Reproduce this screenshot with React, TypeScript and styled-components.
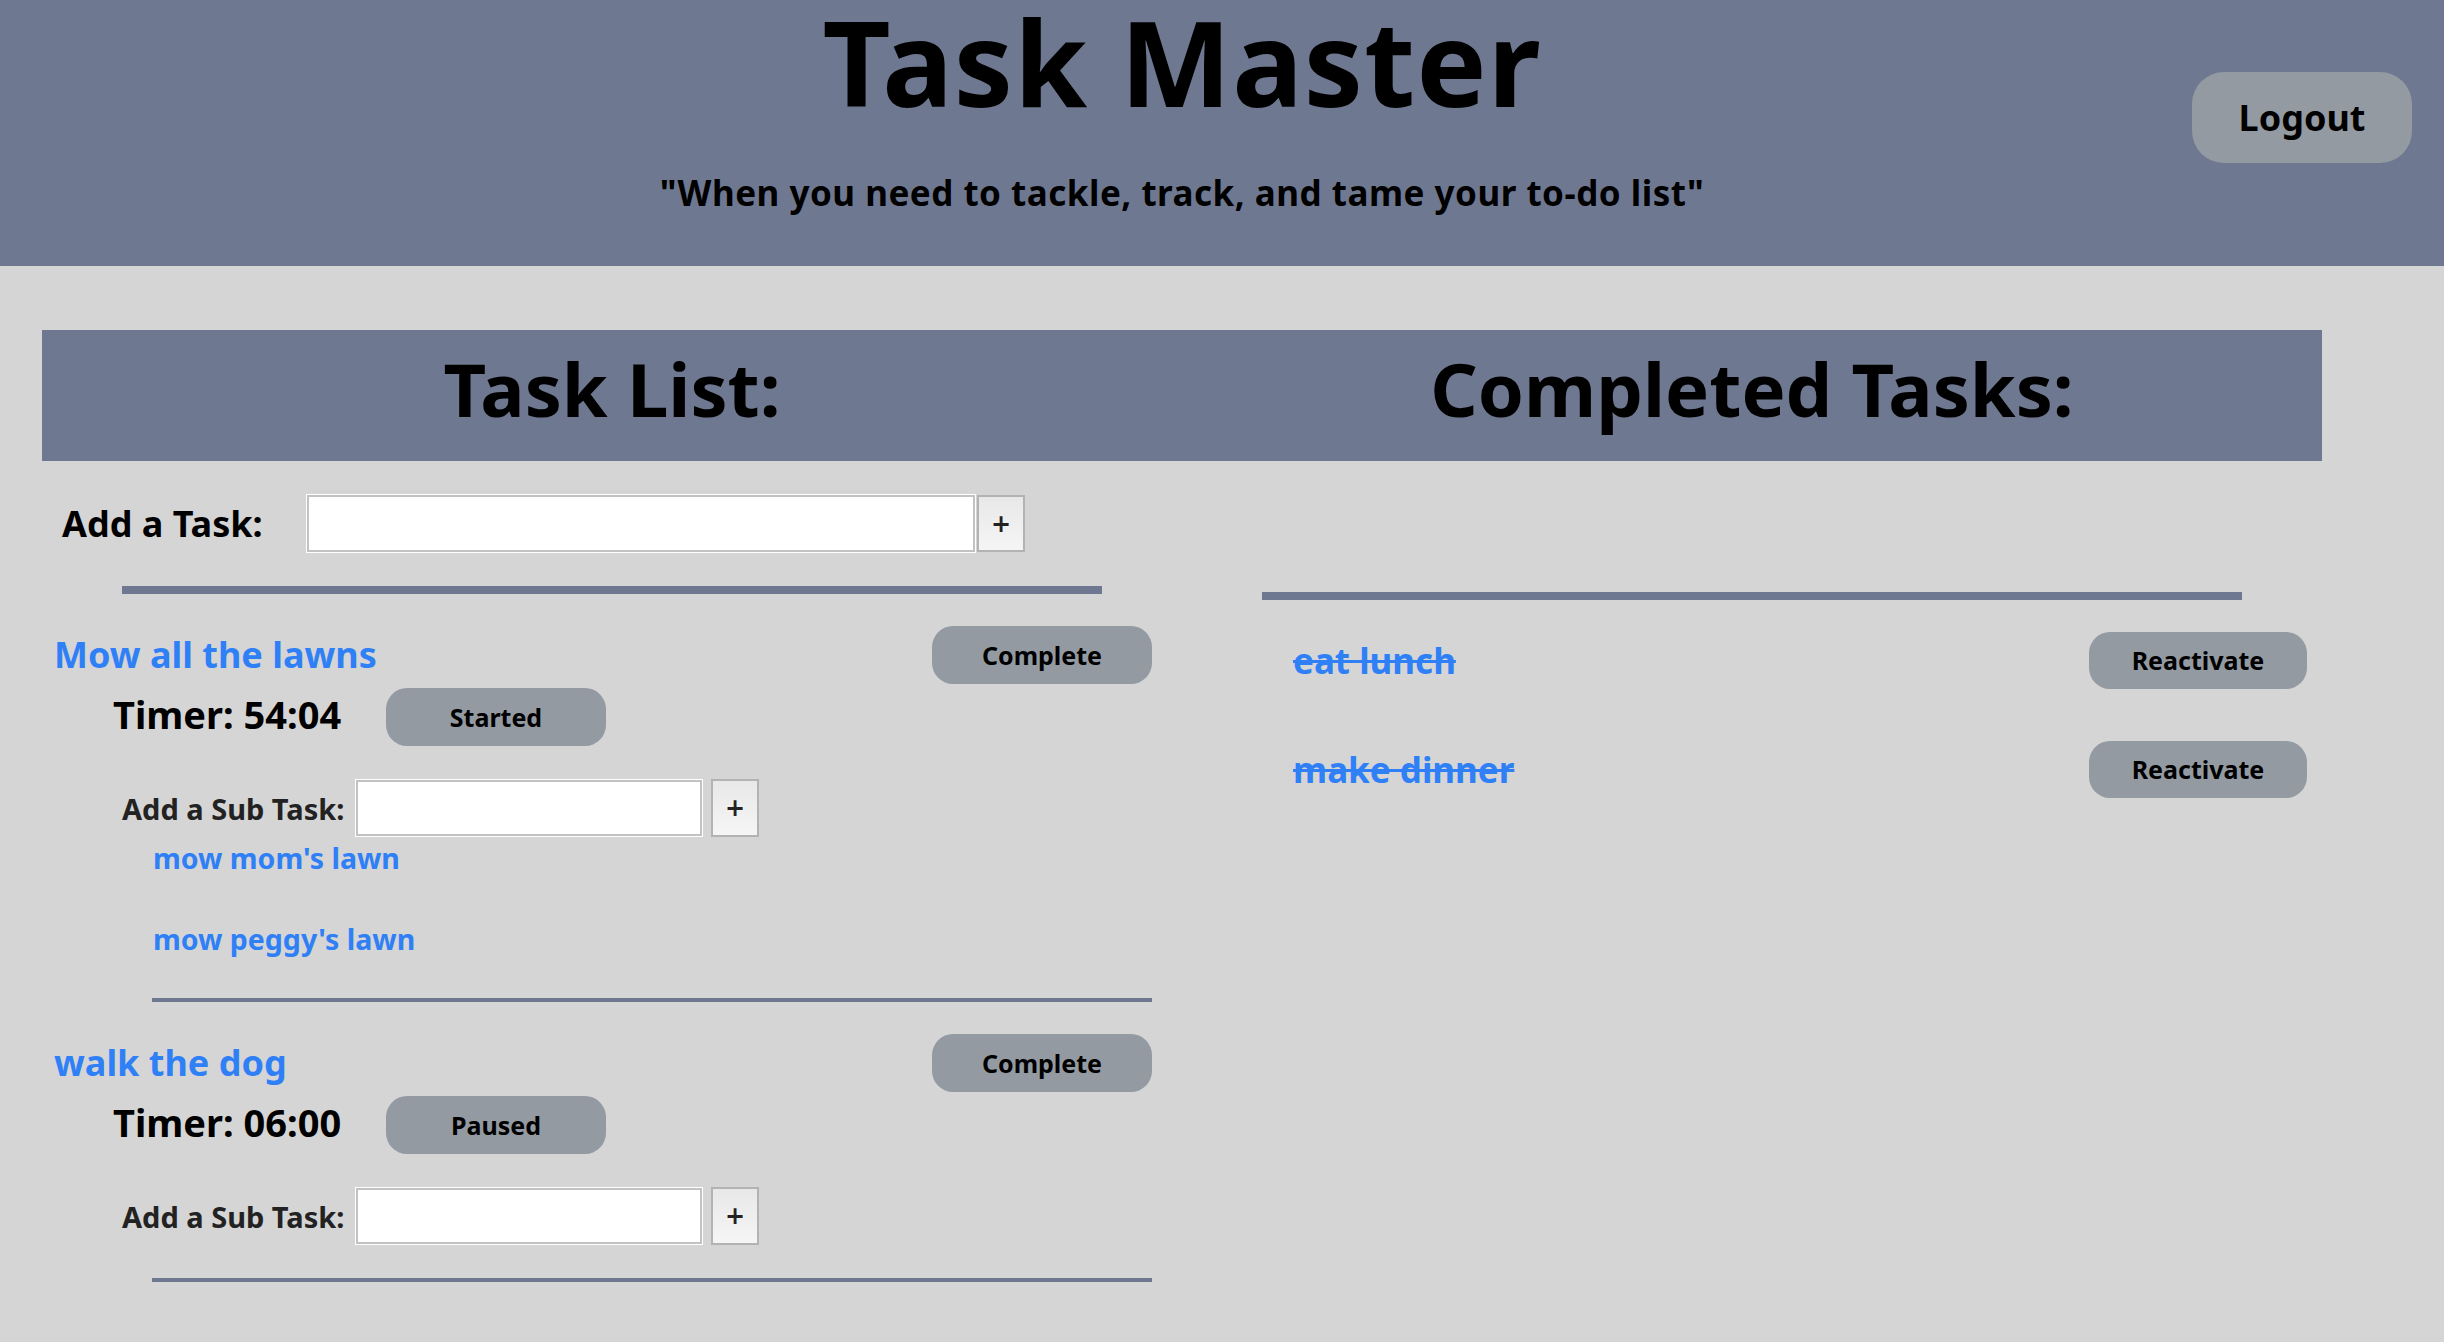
import React from "react";
import styled, { createGlobalStyle } from "styled-components";

const SLATE = "#6f7891";
const PAGE = "#d5d5d5";
const BTN = "#939aa2";
const BLUE = "#2f80f6";

const GlobalStyle = createGlobalStyle`
  html, body { margin: 0; padding: 0; }
  body {
    background: ${PAGE};
    font-family: "Noto Sans", "DejaVu Sans", sans-serif;
    font-weight: 700;
    color: #000;
  }
  * { box-sizing: border-box; }
`;

const Header = styled.header`
  display: grid;
  grid-template-columns: 1fr;
  height: 266px;
  background: ${SLATE};
`;

const Brand = styled.div`
  grid-area: 1 / 1;
  padding: 3px 80px 0 0;
  text-align: center;
`;

const Title = styled.h1`
  margin: 0;
  font-size: 118px;
  line-height: 1;
  font-weight: 700;
  letter-spacing: 1px;
`;

const Tagline = styled.p`
  margin: 54px 0 0;
  font-size: 35px;
  line-height: 1;
  letter-spacing: 0.5px;
`;

const PillButton = styled.button<{ $w: number; $h: number; $size: number; $radius?: number }>`
  width: ${(p) => p.$w}px;
  height: ${(p) => p.$h}px;
  flex: none;
  border: none;
  border-radius: ${(p) => p.$radius ?? 21}px;
  background: ${BTN};
  color: #000;
  font-family: inherit;
  font-weight: 700;
  font-size: ${(p) => p.$size}px;
  line-height: 1;
  padding: 0;
  cursor: pointer;
`;

const LogoutButton = styled(PillButton)`
  grid-area: 1 / 1;
  justify-self: end;
  align-self: start;
  margin-top: 72px;
  margin-right: 32px;
`;

const Board = styled.main`
  display: grid;
  grid-template-columns: 1fr 1fr;
  width: 2280px;
  margin: 64px 0 40px 42px;
`;

const Column = styled.section`
  display: flex;
  flex-direction: column;
`;

const ColumnTitle = styled.h2`
  margin: 0;
  height: 131px;
  padding-top: 22px;
  background: ${SLATE};
  font-size: 74px;
  line-height: 1;
  text-align: center;
  font-weight: 700;
`;

const Rule = styled.div<{ $top: number }>`
  height: 8px;
  margin: ${(p) => p.$top}px 80px 0;
  background: ${SLATE};
`;

const AddForm = styled.form`
  display: flex;
  align-items: center;
  margin-top: 33px;
  padding-left: 20px;
`;

const AddLabel = styled.label<{ $w: number; $size: number; $color?: string }>`
  width: ${(p) => p.$w}px;
  flex: none;
  font-size: ${(p) => p.$size}px;
  color: ${(p) => p.$color ?? "#000"};
  white-space: nowrap;
`;

const TextInput = styled.input<{ $w: number; $h: number }>`
  width: ${(p) => p.$w}px;
  height: ${(p) => p.$h}px;
  background: #fff;
  border: 1px solid #fff;
  box-shadow: inset 0 0 0 2px #c2c2c2, inset 0 0 0 3px #fff;
  outline: none;
  padding: 0 6px;
  font-family: inherit;
  font-size: 24px;
`;

const PlusButton = styled.button<{ $h: number; $gap: number }>`
  width: 48px;
  height: ${(p) => p.$h}px;
  margin-left: ${(p) => p.$gap}px;
  border: 2px solid #b3b3b3;
  background: linear-gradient(#e8e8e8, #f5f5f5);
  color: #222;
  font-family: "DejaVu Sans", sans-serif;
  font-weight: 700;
  font-size: 24px;
  line-height: 1;
  padding: 0;
`;

const TaskList = styled.div`
  padding: 0 30px 0 12px;
`;

const TaskCard = styled.article`
  padding-top: 32px;
`;

const TitleRow = styled.div`
  display: flex;
  justify-content: space-between;
  align-items: center;
`;

const TaskTitle = styled.span`
  color: ${BLUE};
  font-size: 36px;
  line-height: 1;
`;

const TimerRow = styled.div`
  display: flex;
  align-items: center;
  gap: 48px;
  margin-top: 4px;
  padding-left: 59px;
`;

const TimerText = styled.span`
  font-size: 38px;
  line-height: 1;
  width: 225px;
  margin-top: -6px;
  white-space: nowrap;
`;

const SubForm = styled.form`
  display: flex;
  align-items: center;
  margin-top: 33px;
  padding-left: 68px;
`;

const SubList = styled.ul`
  list-style: none;
  margin: 0;
  padding: 4px 0 9px 99px;
  display: flex;
  flex-direction: column;
  gap: 47px;
`;

const SubItem = styled.li`
  color: ${BLUE};
  font-size: 28.5px;
  line-height: 1.2;
`;

const TaskDivider = styled.div`
  height: 4px;
  margin: 33px 0 0 98px;
  background: ${SLATE};
`;

const DoneList = styled.div`
  display: flex;
  flex-direction: column;
  gap: 52px;
  padding: 32px 15px 0 111px;
`;

const DoneRow = styled.div`
  display: flex;
  justify-content: space-between;
  align-items: center;
`;

const DoneText = styled.span`
  color: ${BLUE};
  font-size: 35px;
  line-height: 1;
  text-decoration: line-through;
  text-decoration-thickness: 3px;
`;

type Task = { title: string; timer: string; state: string; subs: string[] };

const tasks: Task[] = [
  { title: "Mow all the lawns", timer: "54:04", state: "Started", subs: ["mow mom's lawn", "mow peggy's lawn"] },
  { title: "walk the dog", timer: "06:00", state: "Paused", subs: [] },
];

const done = ["eat lunch", "make dinner"];

export default function App() {
  return (
    <>
      <GlobalStyle />
      <Header>
        <Brand>
          <Title>Task Master</Title>
          <Tagline>"When you need to tackle, track, and tame your to-do list"</Tagline>
        </Brand>
        <LogoutButton $w={220} $h={91} $size={36} $radius={32}>
          Logout
        </LogoutButton>
      </Header>
      <Board>
        <Column>
          <ColumnTitle>Task List:</ColumnTitle>
          <AddForm onSubmit={(e) => e.preventDefault()}>
            <AddLabel $w={244} $size={36}>Add a Task:</AddLabel>
            <TextInput $w={670} $h={59} />
            <PlusButton $h={57} $gap={1}>+</PlusButton>
          </AddForm>
          <Rule $top={33} />
          <TaskList>
            {tasks.map((t) => (
              <TaskCard key={t.title}>
                <TitleRow>
                  <TaskTitle>{t.title}</TaskTitle>
                  <PillButton $w={220} $h={58} $size={25}>Complete</PillButton>
                </TitleRow>
                <TimerRow>
                  <TimerText>Timer: {t.timer}</TimerText>
                  <PillButton $w={220} $h={58} $size={25}>{t.state}</PillButton>
                </TimerRow>
                <SubForm onSubmit={(e) => e.preventDefault()}>
                  <AddLabel $w={233} $size={29} $color="#222">Add a Sub Task:</AddLabel>
                  <TextInput $w={348} $h={58} />
                  <PlusButton $h={58} $gap={8}>+</PlusButton>
                </SubForm>
                {t.subs.length > 0 && (
                  <SubList>
                    {t.subs.map((s) => (
                      <SubItem key={s}>{s}</SubItem>
                    ))}
                  </SubList>
                )}
                <TaskDivider />
              </TaskCard>
            ))}
          </TaskList>
        </Column>
        <Column>
          <ColumnTitle>Completed Tasks:</ColumnTitle>
          <Rule $top={131} />
          <DoneList>
            {done.map((d) => (
              <DoneRow key={d}>
                <DoneText>{d}</DoneText>
                <PillButton $w={218} $h={57} $size={25}>Reactivate</PillButton>
              </DoneRow>
            ))}
          </DoneList>
        </Column>
      </Board>
    </>
  );
}
